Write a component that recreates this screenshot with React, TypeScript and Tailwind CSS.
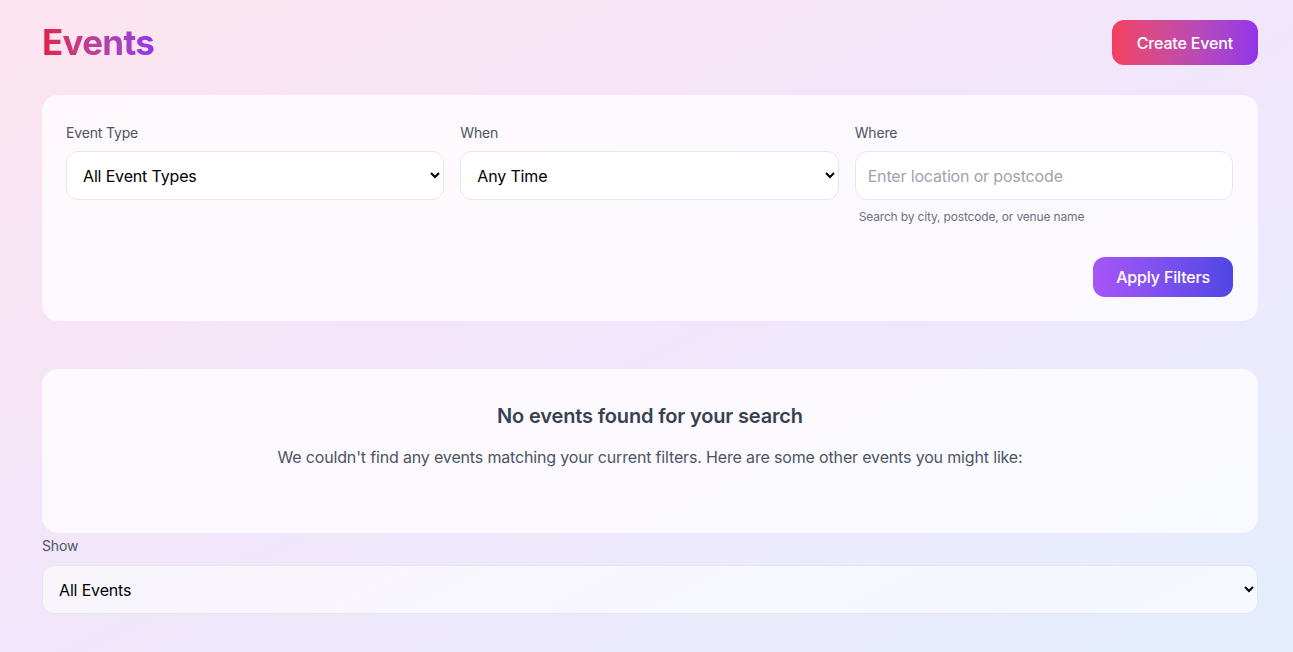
import { ChangeEvent, useState } from "react";

const font = { fontFamily: "Inter, 'Open Sans', sans-serif" };

export default function App() {
  const [type, setType] = useState("all");
  const [when, setWhen] = useState("any");
  const [where, setWhere] = useState("");
  const [show, setShow] = useState("all");

  return (
    <div
      style={font}
      className="min-h-screen bg-gradient-to-br from-[#fce4ee] via-[#f1e6fb] to-[#e4eefd] pl-[42px] pr-[35px] pt-5 pb-8 tracking-[-0.01em]"
    >
      <div className="flex items-center justify-between">
        <h1 className="text-[35px] font-bold leading-[45px] tracking-[-0.02em] bg-gradient-to-r from-[#e11d48] to-[#9333ea] bg-clip-text text-transparent">
          Events
        </h1>
        <button className="h-[45px] px-[25px] rounded-xl bg-gradient-to-r from-[#f43f5e] to-[#9333ea] text-white text-base font-medium">
          Create Event
        </button>
      </div>

      <div className="mt-[30px] rounded-2xl bg-white/75 pl-6 pr-[25px] pt-7 pb-6">
        <div className="grid grid-cols-3 gap-4">
          <div>
            <label className="block text-sm text-[#4b5563] mb-2">Event Type</label>
            <select
              value={type}
              onChange={(e: ChangeEvent<HTMLSelectElement>) => setType(e.target.value)}
              className="w-full h-[49px] px-3 rounded-xl border border-[#e5e7eb] bg-white text-base text-black"
            >
              <option value="all">All Event Types</option>
              <option value="music">Music</option>
              <option value="sport">Sport</option>
            </select>
          </div>
          <div>
            <label className="block text-sm text-[#4b5563] mb-2">When</label>
            <select
              value={when}
              onChange={(e: ChangeEvent<HTMLSelectElement>) => setWhen(e.target.value)}
              className="w-full h-[49px] px-3 rounded-xl border border-[#e5e7eb] bg-white text-base text-black"
            >
              <option value="any">Any Time</option>
              <option value="today">Today</option>
              <option value="week">This Week</option>
            </select>
          </div>
          <div>
            <label className="block text-sm text-[#4b5563] mb-2">Where</label>
            <input
              value={where}
              onChange={(e) => setWhere(e.target.value)}
              placeholder="Enter location or postcode"
              className="w-full h-[49px] px-3 rounded-xl border border-[#e5e7eb] bg-white text-base text-black placeholder:text-[#9ca3af] outline-none"
            />
            <p className="mt-[9px] ml-1 text-xs text-[#6b7280]">Search by city, postcode, or venue name</p>
          </div>
        </div>
        <div className="flex justify-end mt-8">
          <button className="h-10 px-[23px] rounded-xl bg-gradient-to-r from-[#a855f7] to-[#4f46e5] text-white text-base font-medium">
            Apply Filters
          </button>
        </div>
      </div>

      <div className="mt-12 rounded-2xl bg-white/75 h-[164px] pt-[33px] text-center">
        <h2 className="text-xl font-semibold text-[#374151]">No events found for your search</h2>
        <p className="mt-[15px] text-base text-[#4b5563]">
          We couldn't find any events matching your current filters. Here are some other events you might like:
        </p>
      </div>

      <label className="block mt-[3px] text-sm text-[#4b5563] mb-[9px]">Show</label>
      <select
        value={show}
        onChange={(e: ChangeEvent<HTMLSelectElement>) => setShow(e.target.value)}
        className="w-full h-[49px] px-3 rounded-xl border border-[#e5e7eb] bg-white/60 text-base text-black"
      >
        <option value="all">All Events</option>
        <option value="mine">My Events</option>
      </select>
    </div>
  );
}
